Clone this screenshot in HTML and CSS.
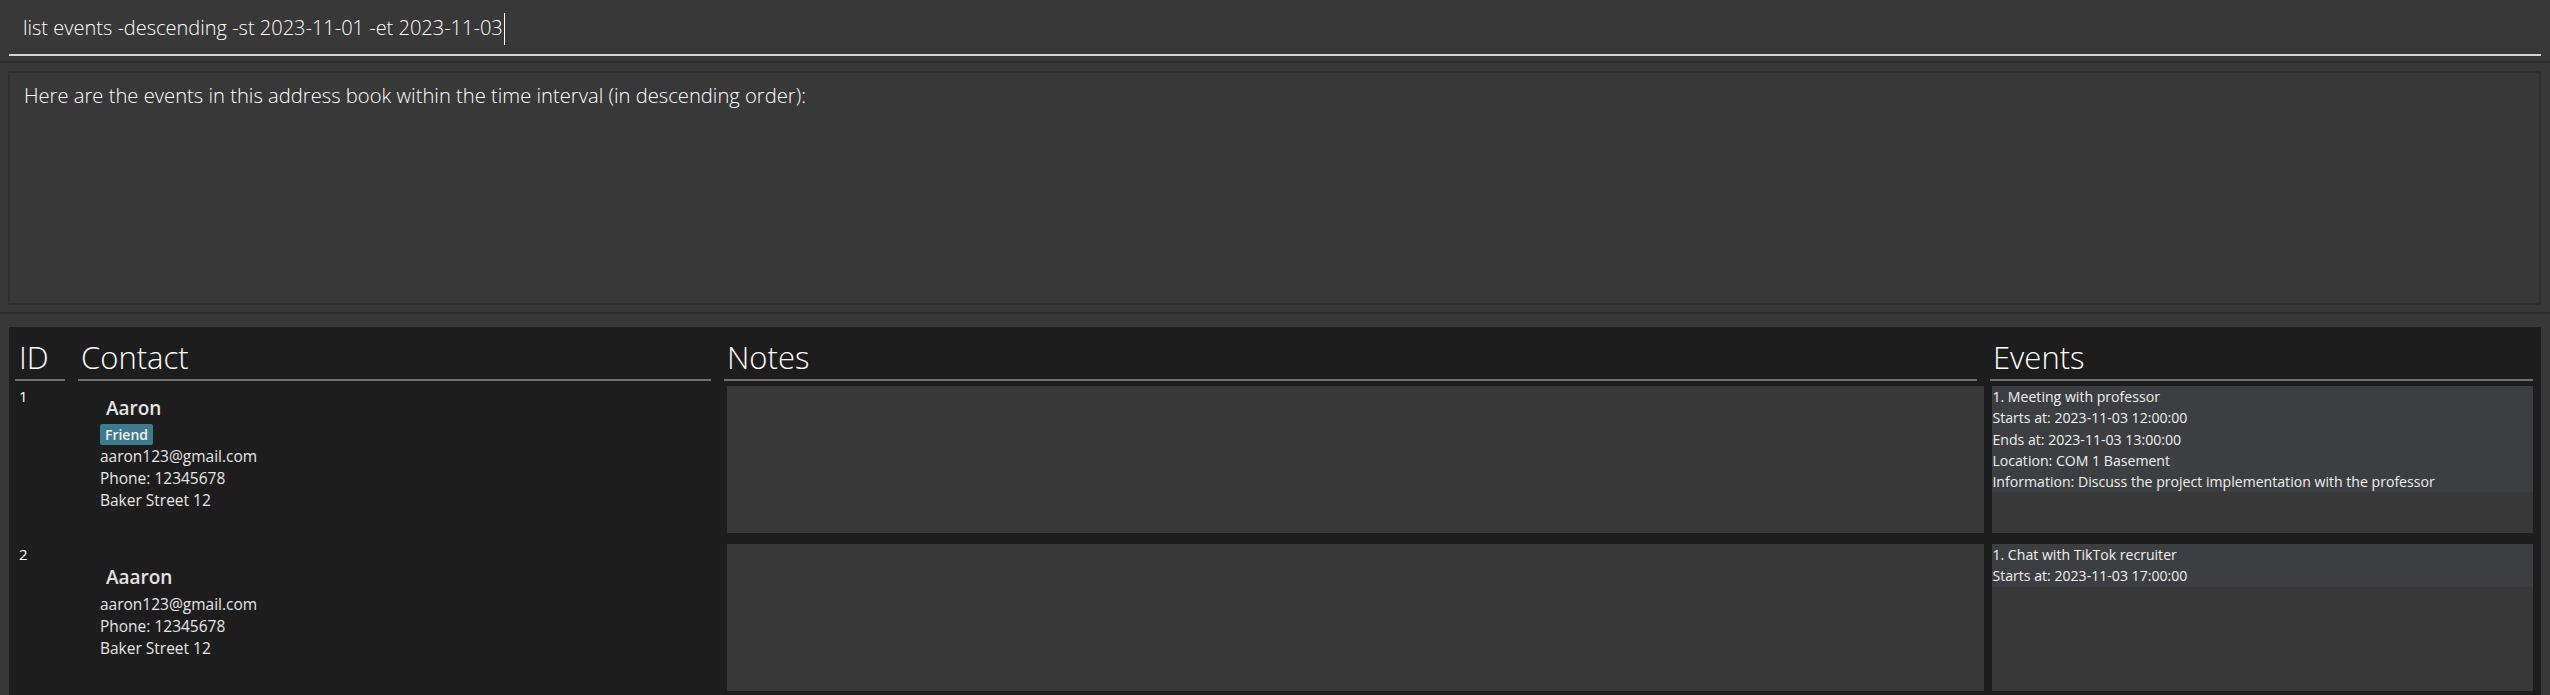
FILE: index.html
```html
<!DOCTYPE html>
<html lang="en">
<head>
<meta charset="utf-8">
<title>Address Book</title>
<link rel="stylesheet" href="styles.css">
</head>
<body>
<div class="app">
  <div class="command-field">
    <span class="command-text">list events -descending -st 2023-11-01 -et 2023-11-03</span><span class="caret"></span>
  </div>
  <div class="sep sep-top"></div>
  <div class="result-box">
    <div class="result-text">Here are the events in this address book within the time interval (in descending order):</div>
  </div>
  <div class="sep sep-bottom"></div>
  <div class="list-panel">
    <div class="headers">
      <div class="header h-id">ID</div>
      <div class="header h-contact">Contact</div>
      <div class="header h-notes">Notes</div>
      <div class="header h-events">Events</div>
    </div>
    <div class="rows">
      <div class="row">
        <div class="cell-id">1</div>
        <div class="cell-contact">
          <div class="name">Aaron</div>
          <div class="tags"><span class="tag">Friend</span></div>
          <div class="info">aaron123@gmail.com</div>
          <div class="info">Phone: 12345678</div>
          <div class="info">Baker Street 12</div>
        </div>
        <div class="cell-notes"></div>
        <div class="cell-events">
          <div class="event">
            <div class="ev-line">1. Meeting with professor</div>
            <div class="ev-line">Starts at: 2023-11-03 12:00:00</div>
            <div class="ev-line">Ends at: 2023-11-03 13:00:00</div>
            <div class="ev-line">Location: COM 1 Basement</div>
            <div class="ev-line">Information: Discuss the project implementation with the professor</div>
          </div>
        </div>
      </div>
      <div class="row">
        <div class="cell-id">2</div>
        <div class="cell-contact">
          <div class="name">Aaaron</div>
          <div class="info">aaron123@gmail.com</div>
          <div class="info">Phone: 12345678</div>
          <div class="info">Baker Street 12</div>
        </div>
        <div class="cell-notes"></div>
        <div class="cell-events">
          <div class="event">
            <div class="ev-line">1. Chat with TikTok recruiter</div>
            <div class="ev-line">Starts at: 2023-11-03 17:00:00</div>
          </div>
        </div>
      </div>
    </div>
  </div>
</div>
</body>
</html>
```

FILE: styles.css
```css
* {
  box-sizing: border-box;
  margin: 0;
  padding: 0;
}

html,
body {
  width: 2550px;
  height: 695px;
  overflow: hidden;
}

body {
  background: #383838;
  font-family: "Open Sans", "Noto Sans", sans-serif;
  color: #ffffff;
}

.app {
  display: flex;
  flex-direction: column;
  height: 695px;
}

/* command box */
.command-field {
  height: 56px;
  margin: 0 9px;
  padding: 14px 0 0 14px;
  border-bottom: 2px solid #d4d4d4;
  display: flex;
  align-items: flex-start;
}

.command-text {
  font-size: 20px;
  font-weight: 300;
  line-height: 28px;
  color: #ffffff;
  white-space: pre;
}

.caret {
  display: inline-block;
  width: 1px;
  height: 32px;
  margin-top: -1px;
  margin-left: 1px;
  background: #ffffff;
}

.sep {
  height: 2px;
  background: #2b2b2b;
}

.sep-top {
  margin: 5px 0 8px;
}

.sep-bottom {
  margin: 7px 0 13px;
}

/* result display */
.result-box {
  height: 234px;
  margin: 0 9px 0 8px;
  border: 2px solid #2e2e2e;
  padding: 8px 14px 0;
}

.result-text {
  font-size: 20.2px;
  font-weight: 300;
  line-height: 28px;
  color: #ffffff;
}

/* list panel */
.list-panel {
  flex: 1;
  margin: 0 9px;
  background: #1d1d1d;
  padding: 0 8px 0 6px;
  overflow: hidden;
}

.headers {
  display: flex;
  column-gap: 13px;
}

.header {
  padding: 9px 0 0 3px;
  height: 54px;
  font-size: 31px;
  font-weight: 300;
  line-height: 43px;
  color: #ffffff;
  border-bottom: 2px solid #707070;
  white-space: nowrap;
}

.h-id {
  width: 50px;
  padding-left: 4px;
}

.h-contact {
  width: 633px;
}

.h-notes {
  width: 1253px;
}

.h-events {
  width: 543px;
}

.rows {
  display: flex;
  flex-direction: column;
  row-gap: 11px;
  padding-top: 5px;
}

.row {
  display: flex;
  height: 147px;
  flex-shrink: 0;
}

.cell-id {
  width: 63px;
  padding-left: 4px;
  font-size: 15px;
  line-height: 20px;
  color: #ffffff;
}

.cell-contact {
  width: 650px;
  padding: 0 0 12px 22px;
  display: flex;
  flex-direction: column;
  justify-content: center;
}

.name {
  padding-left: 6px;
  font-size: 19px;
  font-weight: 600;
  line-height: 24px;
  color: #e4e4e4;
  margin-bottom: 4px;
}

.tags {
  display: flex;
}

.tag {
  height: 21px;
  padding: 0 5px;
  font-size: 14px;
  font-weight: 600;
  line-height: 21px;
  color: #f2f2f2;
  background: #3e7b91;
  border-radius: 2px;
}

.info {
  font-size: 15.5px;
  line-height: 22px;
  color: #e6e6e6;
}

.cell-notes {
  width: 1258px;
  background: #383838;
}

.cell-events {
  width: 541px;
  margin-left: 8px;
  background: #383838;
}

.event {
  background: #3d3e41;
}

.ev-line {
  font-size: 14.1px;
  line-height: 21.25px;
  color: #f0f0f0;
  white-space: nowrap;
}
```
